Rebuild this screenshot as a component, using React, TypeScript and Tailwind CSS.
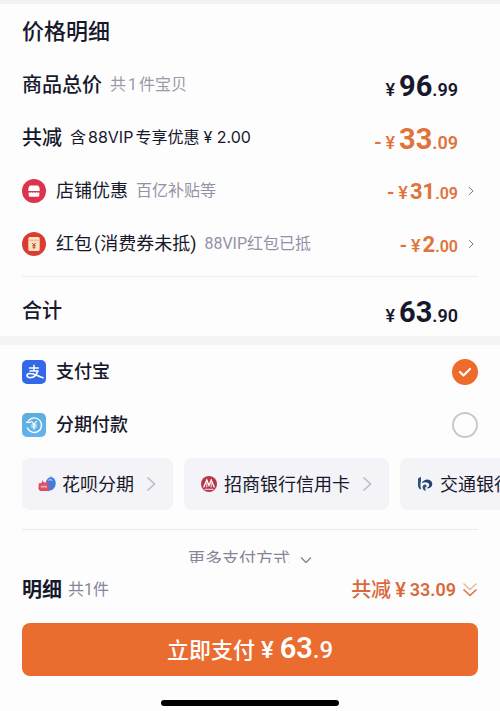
import { useState } from "react";
import type { ReactNode } from "react";

type PriceProps = {
  whole: string;
  cents: string;
  minus?: boolean;
  small?: boolean;
};

function Price({ whole, cents, minus, small }: PriceProps) {
  return (
    <span
      className={`flex items-baseline pt-0.5 font-[Roboto,sans-serif] font-semibold ${
        small ? "text-base" : "text-lg"
      } ${minus ? "text-[#e0733a]" : "text-[#17182b]"}`}
    >
      {minus && <span className="mr-1 text-xl">-</span>}
      <span className={small ? "mr-0.5 text-lg font-medium" : "mr-1 text-lg font-medium"}>¥</span>
      <span className={small ? "text-[22px] font-bold" : "text-[29px] leading-9 font-bold"}>{whole}</span>
      <span>{cents}</span>
    </span>
  );
}

function Chevron({ className }: { className: string }) {
  return (
    <svg viewBox="0 0 10 16" fill="none" stroke="currentColor" className={className} aria-hidden="true">
      <path d="M1.5 1.5 8.5 8l-7 6.5" strokeWidth="1.6" />
    </svg>
  );
}

function ShopIcon() {
  return (
    <svg viewBox="0 0 24 24" className="size-6" aria-hidden="true">
      <circle cx="12" cy="12" r="12" fill="#dc344c" />
      <path d="M7.8 6.5h8.4q1.6 1.7 1.6 5.5H6.2q0-3.8 1.6-5.500z" fill="#fff" />
      <path d="M6.7 13.3q1.3.8 2.6 0 1.35.8 2.7 0 1.35.8 2.7 0 1.3.8 2.6 0v3a1.5 1.5 0 0 1-1.5 1.5H8.2a1.5 1.5 0 0 1-1.5-1.5z" fill="#fff" />
    </svg>
  );
}

function PacketIcon() {
  return (
    <svg viewBox="0 0 24 24" className="size-6" aria-hidden="true">
      <circle cx="12" cy="12" r="12" fill="#d93c33" />
      <rect x="6.3" y="5" width="11.4" height="14" rx="1.5" fill="#fbe3c0" />
      <path d="M6.3 8.2h11.4" stroke="#e8a878" strokeWidth=".9" />
      <path d="m10.2 10.8 1.8 2.3 1.8-2.3M12 13v4M10.4 13.6h3.2M10.4 15.2h3.2" stroke="#c94a35" strokeWidth="1" fill="none" />
    </svg>
  );
}

function AlipayIcon() {
  return (
    <svg viewBox="0 0 24 24" className="size-6" aria-hidden="true">
      <rect width="24" height="24" rx="5" fill="#3369e8" />
      <g fill="none" stroke="#fff" strokeLinecap="round">
        <path d="M7.5 8h8.8M12 5.2v5.4M8 11h7.8" strokeWidth="1.5" />
        <path d="M15.8 11.1c-1 3-3.7 6.6-7.3 6.6-2.1 0-3.5-.8-3.5-2.1 0-1.4 1.5-2.1 3-2.1 3.600 0 8 2.600 13 4.2" strokeWidth="1.7" />
      </g>
    </svg>
  );
}

function InstallmentIcon() {
  return (
    <svg viewBox="0 0 24 24" className="size-6" aria-hidden="true">
      <defs>
        <linearGradient id="installment" x1="0" y1="0" x2="0" y2="1">
          <stop offset="0" stopColor="#5eaedb" />
          <stop offset="1" stopColor="#62b3ef" />
        </linearGradient>
      </defs>
      <rect width="24" height="24" rx="5" fill="url(#installment)" />
      <g fill="none" stroke="#fff" strokeLinecap="round" strokeLinejoin="round">
        <path d="M6.6 7.6A7.3 7.3 0 1 1 5.5 15" strokeWidth="1.4" />
        <path d="M4.6 9.3h3.6" strokeWidth="1.5" />
        <path d="m9.6 8.4 2.4 3.1 2.4-3.1M12 11.6v4.6M9.7 12h4.6M9.7 14h4.6" strokeWidth="1.2" />
      </g>
    </svg>
  );
}

function HuabeiIcon() {
  return (
    <svg viewBox="0 0 18 18" className="size-[18px]" aria-hidden="true">
      <path d="M8 6.5C9 4 10.6 2.700 12 2.600l1-1.3 1.2 1.300c2.400.8 3.6 3 3.5 5.900-.1 4.300-3.200 7.300-7.700 7.400z" fill="#4779dc" />
      <path d="M10.4 5.6c1.4-1.5 3.2-1.3 3.8.4" stroke="#a6c4f7" strokeWidth="1.1" fill="none" />
      <path d="M.8 8.3 3.6 8l.5-2.7 2 2.3 4.600-.4V16H2L.4 14z" fill="#d94f63" />
      <path d="M2.4 11.7h6.6M4 10.4v2.700M6 10.4v2.700M7.900 10.4v2.700" stroke="#f6c6cf" strokeWidth=".7" />
    </svg>
  );
}

function CmbIcon() {
  return (
    <svg viewBox="0 0 18 18" className="size-[18px]" aria-hidden="true">
      <circle cx="9" cy="9" r="8" fill="#b5364a" />
      <path d="M3.600 12.400 6.800 5 9 10.500 11.200 5l3.200 7.400" fill="none" stroke="#fff" strokeWidth="1.3" />
      <path d="M6.800 8v4.400M11.200 8v4.400M4.500 14.300h9" fill="none" stroke="#fff" strokeWidth=".9" />
    </svg>
  );
}

function BocomIcon() {
  return (
    <svg viewBox="0 0 18 18" className="size-[18px]" aria-hidden="true">
      <path d="M2 3.6 5 1.8v4.4C4.3 8 4.3 11 5.2 14.6 3 14 2 12.4 2 10z" fill="#28527e" />
      <path d="M5.6 8.2C7.4 5 11 3.800 13.900 5.200c3.200 1.600 3.100 5.900.1 7.600-1.300.7-2.700.7-3.900.2 2.500-.3 3.700-2.200 2.900-4-.9-1.900-4-2.600-7.400-.8z" fill="#24426c" />
      <path d="M6.600 12.800c-.3-1.900.9-3.300 2.400-3.300 1.300 0 1.900 1 1.500 1.900-.3.600-.9.800-1.400.8.100 1.400.2 2.500.9 3.500-1.900.1-3.200-1.100-3.400-2.900z" fill="#28527e" />
    </svg>
  );
}

function DoubleChevron() {
  return (
    <svg viewBox="0 0 16 18" fill="none" stroke="#d9743f" className="h-[18px] w-4" aria-hidden="true">
      <path d="m1.5 2.5 6.5 6 6.5-6" strokeWidth="1.4" opacity=".5" />
      <path d="m1.5 8.5 6.5 6 6.5-6" strokeWidth="1.6" />
    </svg>
  );
}

const discounts = [
  { id: "shop", icon: <ShopIcon />, label: "店铺优惠", extra: "", note: "百亿补贴等", whole: "31", cents: ".09" },
  { id: "packet", icon: <PacketIcon />, label: "红包", extra: "(消费券未抵)", note: "88VIP红包已抵", whole: "2", cents: ".00" },
];

const methods = [
  { id: "alipay", label: "支付宝", icon: <AlipayIcon /> },
  { id: "installment", label: "分期付款", icon: <InstallmentIcon /> },
];

const plans: { label: string; icon: ReactNode }[] = [
  { label: "花呗分期", icon: <HuabeiIcon /> },
  { label: "招商银行信用卡", icon: <CmbIcon /> },
  { label: "交通银行信用卡", icon: <BocomIcon /> },
];

export default function App() {
  const [method, setMethod] = useState("alipay");

  return (
    <div className="flex h-dvh flex-col bg-[#fdfdfd] font-[Roboto,'Noto_Sans_CJK_SC',sans-serif] text-[#17182b]">
      <main className="min-h-0 flex-1 overflow-y-auto border-t-4 border-[#f3f3f3] [scrollbar-width:none]">
        <section className="px-[22px]">
          <h1 className="flex h-[54px] items-center text-[22px] font-medium">价格明细</h1>
          <div className="flex h-[53px] items-center justify-between pr-5">
            <p className="flex items-center gap-2">
              <span className="text-xl font-medium">商品总价</span>
              <span className="text-base text-[#9a9aa8]">
                共<span className="mx-0.5">1</span>件宝贝
              </span>
            </p>
            <Price whole="96" cents=".99" />
          </div>
          <div className="flex h-[53px] items-center justify-between pr-5">
            <p className="flex items-center gap-2">
              <span className="text-xl font-medium">共减</span>
              <span className="text-base">
                含<span className="mx-0.5 font-[Inter,sans-serif]">88VIP</span>专享优惠
                <span className="ml-1 font-[Inter,sans-serif]">¥ 2.00</span>
              </span>
            </p>
            <Price minus whole="33" cents=".09" />
          </div>
          {discounts.map((d) => (
            <button key={d.id} type="button" className="flex h-[53px] w-full items-center text-left">
              {d.icon}
              <span className="ml-2.5 text-lg">{d.label}</span>
              {d.extra && <span className="ml-0.5 text-lg">{d.extra}</span>}
              <span className="ml-2 text-base text-[#9292a6]">{d.note}</span>
              <span className="ml-auto flex items-center">
                <Price minus small whole={d.whole} cents={d.cents} />
                <Chevron className="mr-1 ml-2.5 h-2.5 w-1.5 text-[#77777f]" />
              </span>
            </button>
          ))}
          <div className="mt-1.5 flex h-[60px] items-center justify-between border-t border-[#ececee] pt-2 pr-5">
            <span className="text-xl font-medium">合计</span>
            <Price whole="63" cents=".90" />
          </div>
        </section>

        <div className="h-[9px] bg-[#f3f3f3]" />

        <section>
          {methods.map((m) => (
            <label key={m.id} className="flex h-[53px] cursor-pointer items-center px-[22px]">
              {m.icon}
              <span className="ml-2.5 text-lg font-medium">{m.label}</span>
              <span className="ml-auto grid place-items-center">
                <input
                  type="radio"
                  name="method"
                  value={m.id}
                  checked={method === m.id}
                  onChange={() => setMethod(m.id)}
                  className="col-start-1 row-start-1 size-[26px] appearance-none rounded-full border-2 border-[#c9c9cc] checked:border-[#ee6b2d] checked:bg-[#ee6b2d]"
                />
                {method === m.id && (
                  <svg viewBox="0 0 14 12" className="pointer-events-none col-start-1 row-start-1 h-3 w-3.5" aria-hidden="true">
                    <path d="m2 6 3.5 3.5L12 3" fill="none" stroke="#fff" strokeWidth="2.2" strokeLinecap="round" strokeLinejoin="round" />
                  </svg>
                )}
              </span>
            </label>
          ))}
          <div className="mt-[7px] flex gap-[11px] overflow-x-auto px-[22px] [scrollbar-width:none]">
            {plans.map((p) => (
              <button
                key={p.label}
                type="button"
                className="flex h-[52px] shrink-0 items-center rounded-lg bg-[#f3f3f8] pr-[17px] pl-4 text-lg"
              >
                {p.icon}
                <span className="ml-1.5 pt-0.5">{p.label}</span>
                <Chevron className="ml-3 h-4 w-2.5 text-[#bcbcc4]" />
              </button>
            ))}
          </div>
          <div className="mx-[22px] mt-[19px] border-t border-[#ececee]">
            <button type="button" className="flex h-[60px] w-full items-center justify-center gap-2.5 text-[17px] text-[#85859a]">
              更多支付方式
              <svg viewBox="0 0 12 8" className="h-2 w-3" aria-hidden="true">
                <path d="m1 1.5 5 5 5-5" fill="none" stroke="currentColor" strokeWidth="1.4" />
              </svg>
            </button>
          </div>
        </section>
      </main>

      <footer className="shrink-0 bg-[#fdfdfd] px-[22px] pb-[5px]">
        <div className="flex h-[53px] items-center justify-between">
          <p className="flex items-center gap-1.5">
            <span className="text-xl font-bold">明细</span>
            <span className="text-base text-[#85859a]">共1件</span>
          </p>
          <button type="button" className="flex items-center text-xl font-medium text-[#d9693a]">
            共减
            <span className="mx-1">¥</span>
            <span className="text-lg font-semibold">33.09</span>
            <span className="ml-1.5">
              <DoubleChevron />
            </span>
          </button>
        </div>
        <button
          type="button"
          className="mt-[7px] flex h-[53px] w-full items-center justify-center rounded-lg bg-[#ea6d2f] pb-0.5 text-[22px] font-medium text-white"
        >
          <span className="flex items-baseline">
            立即支付
            <span className="mx-1.5 text-2xl">¥</span>
            <span className="text-[29px] font-semibold">63</span>
            <span className="text-2xl">.9</span>
          </span>
        </button>
        <div className="mx-auto mt-6 h-1.5 w-[39%] rounded-full bg-black" />
      </footer>
    </div>
  );
}
